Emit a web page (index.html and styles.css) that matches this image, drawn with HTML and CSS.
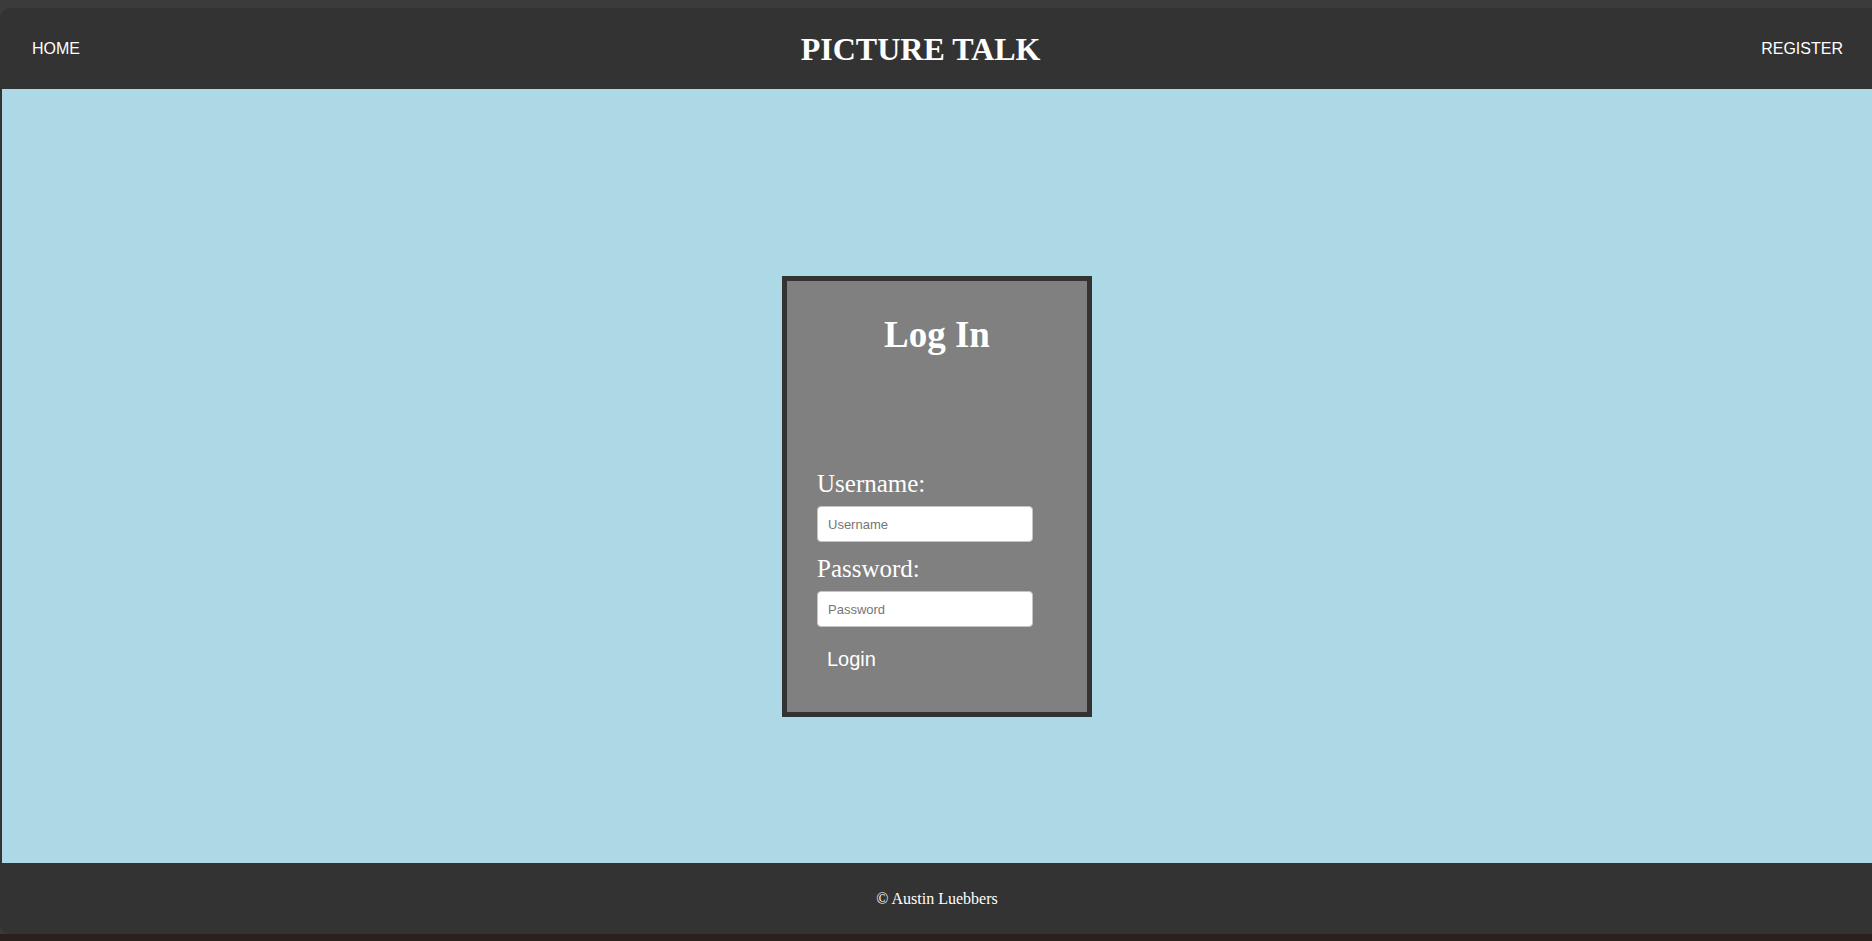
FILE: index.html
```html
<!DOCTYPE html>
<html lang="en">
<head>
<meta charset="utf-8">
<title>Picture Talk - Log In</title>
<link rel="stylesheet" href="styles.css">
</head>
<body>
<div class="window">
  <header class="topbar">
    <a class="nav-link" href="#">HOME</a>
    <h1 class="brand">PICTURE TALK</h1>
    <a class="nav-link" href="#">REGISTER</a>
  </header>
  <main class="content">
    <form class="login-card">
      <h2 class="login-title">Log In</h2>
      <label class="field-label first" for="username">Username:</label>
      <input class="field-input" id="username" type="text" placeholder="Username">
      <label class="field-label" for="password">Password:</label>
      <input class="field-input" id="password" type="password" placeholder="Password">
      <button class="login-btn" type="button">Login</button>
    </form>
  </main>
  <footer class="footer">© Austin Luebbers</footer>
</div>
<div class="bottom-strip"></div>
</body>
</html>
```
FILE: styles.css
```css
html, body {
  margin: 0;
  padding: 0;
  height: 100%;
}
body {
  background: #3b3b3b;
  display: flex;
  flex-direction: column;
  overflow: hidden;
}
.window {
  flex: 1;
  display: flex;
  flex-direction: column;
  margin-top: 8px;
  padding-left: 2px;
  background: #333333;
  border-radius: 10px 0 0 10px;
  min-height: 0;
}
.topbar {
  height: 81px;
  flex: 0 0 81px;
  display: flex;
  align-items: center;
  justify-content: space-between;
  padding: 0 29px 0 30px;
  background: #333333;
  border-top-left-radius: 10px;
}
.nav-link {
  color: #ffffff;
  text-decoration: none;
  font-family: "Liberation Sans", Arial, sans-serif;
  font-size: 16px;
  line-height: 1;
}
.brand {
  margin: 0;
  color: #ffffff;
  font-family: "Liberation Serif", "Times New Roman", serif;
  font-size: 32px;
  font-weight: bold;
  line-height: 1;
}
.content {
  flex: 0 0 774px;
  background: #add8e6;
  display: flex;
  justify-content: center;
  align-items: flex-start;
  padding-top: 187px;
  box-sizing: border-box;
}
.login-card {
  width: 310px;
  height: 441px;
  background: #808080;
  border: 5px solid #333333;
  box-sizing: border-box;
  display: flex;
  flex-direction: column;
  align-items: flex-start;
  padding: 0 0 0 30px;
}
.login-title {
  align-self: stretch;
  margin: 32px 0 0 -30px;
  text-align: center;
  color: #ffffff;
  font-family: "Liberation Serif", "Times New Roman", serif;
  font-size: 37px;
  font-weight: bold;
  line-height: 44px;
}
.field-label {
  color: #ffffff;
  font-family: "Liberation Serif", "Times New Roman", serif;
  font-size: 25px;
  line-height: 29px;
}
.field-label.first {
  margin-top: 112px;
}
.field-input {
  width: 216px;
  height: 36px;
  box-sizing: border-box;
  margin: 8px 0 12px;
  padding: 0 10px;
  border: 1px solid #c4c4c4;
  border-radius: 4px;
  background: #ffffff;
  font-family: "Liberation Sans", Arial, sans-serif;
  font-size: 13px;
  color: #333;
}
.field-input::placeholder {
  color: #757575;
}
.login-btn {
  margin-top: 4px;
  padding: 4px 10px;
  background: transparent;
  border: none;
  color: #ffffff;
  font-family: "Liberation Sans", Arial, sans-serif;
  font-size: 20px;
  line-height: 24px;
  cursor: pointer;
}
.footer {
  flex: 1;
  display: flex;
  align-items: center;
  justify-content: center;
  background: #333333;
  color: #ffffff;
  font-family: "Liberation Serif", "Times New Roman", serif;
  font-size: 16px;
  border-bottom-left-radius: 10px;
}
.bottom-strip {
  flex: 0 0 7px;
  height: 7px;
  background: #2a211c;
}
```
